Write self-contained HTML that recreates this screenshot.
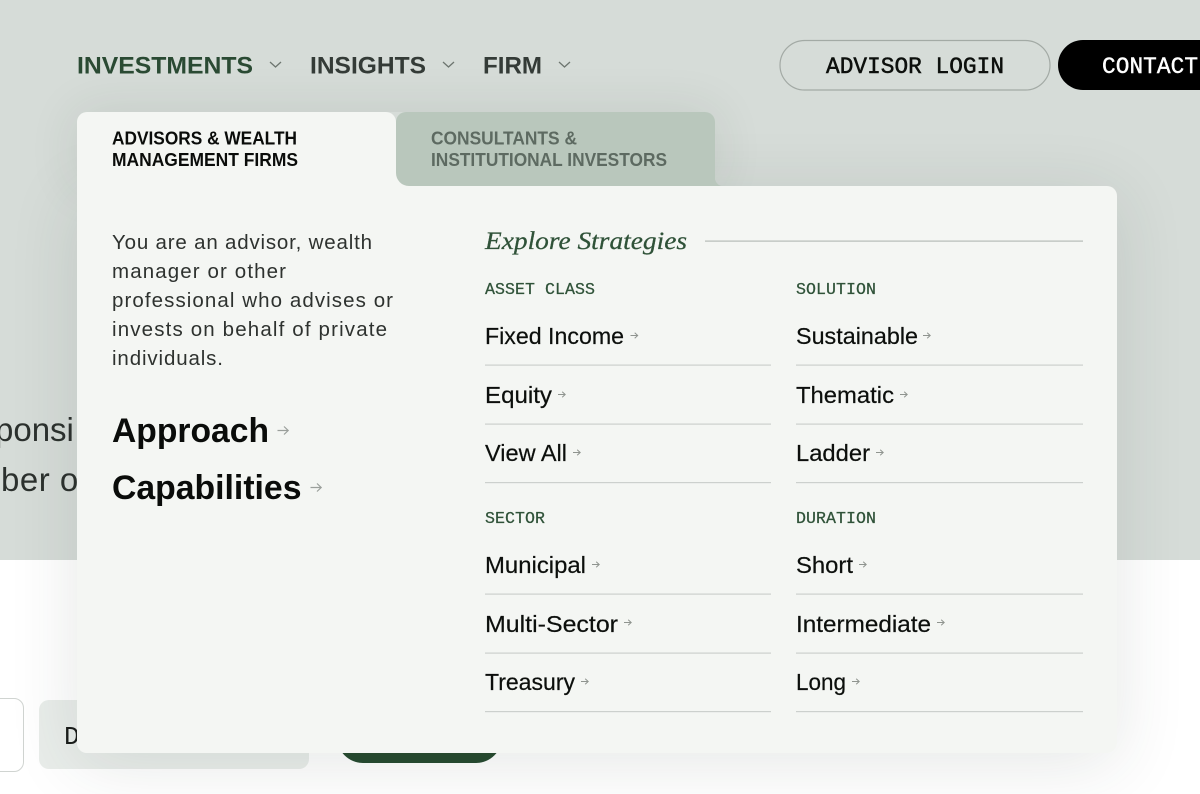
<!DOCTYPE html>
<html lang="en"><head><meta charset="utf-8"><title>Investments menu</title>
<style>
html,body{margin:0;padding:0;background:#fff;}
#p{position:relative;width:1200px;height:794px;overflow:hidden;background:#fff;}
#p>*{position:absolute;}
svg{left:0;top:0;}
svg text{font-family:"Liberation Sans",sans-serif;}
.m{font-family:"Liberation Mono",monospace!important;}
.s{font-family:"Liberation Serif",serif!important;}
.l{font-size:23px;fill:#0c0f0c;stroke:#0c0f0c;stroke-width:.2px;}
.h{font-size:16.6px;fill:#2f5238;stroke:#2f5238;stroke-width:.25px;}
.t{font-size:18px;font-weight:bold;}
.b{font-size:20.5px;fill:#2e322f;}
.n{font-size:24.5px;font-weight:bold;}
.a{font-size:34.5px;font-weight:bold;fill:#0a0c0a;}
</style></head><body>
<div id="p">
<div style="left:0;top:0;width:1200px;height:560px;background:#d6dcd8"></div>
<div style="left:-40px;top:698px;width:62px;height:72px;background:#fff;border:1.5px solid #d0d4d1;border-radius:10px"></div>
<div style="left:39px;top:700px;width:270px;height:69px;background:#e9edea;border-radius:10px"></div>
<div style="left:337px;top:700px;width:165px;height:63px;background:#264a2f;border-radius:26px"></div>
<svg width="1200" height="794" viewBox="0 0 1200 794">
<text x="-5" y="441" font-size="33" fill="#2c312e">ponsi</text>
<text x="1" y="491" font-size="33" fill="#2c312e" letter-spacing=".5">ber o</text>
<text class="m" x="64" y="744" font-size="26" fill="#1a1c1a">D</text>
</svg>
<div style="left:77px;top:186px;width:1040px;height:567px;border-radius:10px;box-shadow:0 10px 70px rgba(45,60,50,.12)"></div>
<div style="left:77px;top:112px;width:638px;height:74px;border-radius:10px 10px 0 0;box-shadow:0 0 50px rgba(45,60,50,.11)"></div>
<div style="left:77px;top:112px;width:319px;height:90px;background:#f4f6f3;border-radius:10px 10px 0 0"></div>
<div style="left:396px;top:170px;width:16px;height:16px;background:#f4f6f3"></div>
<div style="left:396px;top:112px;width:319px;height:74px;background:#b9c7bc;border-radius:10px 10px 0 13px"></div>
<div style="left:77px;top:186px;width:1040px;height:567px;background:#f4f6f3;border-radius:0 10px 10px 10px"></div>
<svg width="1200" height="794" viewBox="0 0 1200 794">
<defs>
<path id="ar" d="M0 0H7M4.200 -2.800L7.200 0L4.200 2.800" fill="none" stroke="#8f948f" stroke-width="1"/>
<path id="ab" d="M0 0H10.500M6.500 -4L10.700 0L6.500 4" fill="none" stroke="#9a9f9b" stroke-width="1.200"/>
<path id="ch" d="M0 0L5.500 5L11 0" fill="none" stroke="#6d756f" stroke-width="1.300"/>
</defs>
<path d="M714 174Q715 186 723 186L714 186Z" fill="#b9c7bc"/>
<text class="n" x="77" y="73.500" fill="#2a4a33" textLength="176" lengthAdjust="spacingAndGlyphs">INVESTMENTS</text>
<use href="#ch" x="270" y="62"/>
<text class="n" x="310" y="73.500" fill="#343b37" textLength="116" lengthAdjust="spacingAndGlyphs">INSIGHTS</text>
<use href="#ch" x="443" y="62"/>
<text class="n" x="483" y="73.500" fill="#343b37" textLength="59" lengthAdjust="spacingAndGlyphs">FIRM</text>
<use href="#ch" x="559" y="62"/>
<rect x="780" y="40.500" width="270" height="49.500" rx="24.700" fill="none" stroke="#a3aaa5" stroke-width="1.200"/>
<rect x="1058" y="40" width="190" height="50" rx="25" fill="#000"/>
<text class="m" x="826" y="73" font-size="22.800" fill="#0c0f0c" stroke="#0c0f0c" stroke-width=".5" textLength="178" lengthAdjust="spacing">ADVISOR LOGIN</text>
<text class="m" x="1102" y="73" font-size="22.800" fill="#fff" stroke="#fff" stroke-width=".4" textLength="96" lengthAdjust="spacing">CONTACT</text>

<text class="t" x="112" y="144.500" fill="#0a0c0a" textLength="185" lengthAdjust="spacingAndGlyphs">ADVISORS &amp; WEALTH</text>
<text class="t" x="112" y="166" fill="#0a0c0a" textLength="186" lengthAdjust="spacingAndGlyphs">MANAGEMENT FIRMS</text>
<text class="t" x="431" y="144.500" fill="#5d6a61" textLength="146" lengthAdjust="spacingAndGlyphs">CONSULTANTS &amp;</text>
<text class="t" x="431" y="166" fill="#5d6a61" textLength="236" lengthAdjust="spacingAndGlyphs">INSTITUTIONAL INVESTORS</text>

<text class="b" x="112" y="249" textLength="260" lengthAdjust="spacing">You are an advisor, wealth</text>
<text class="b" x="112" y="278" textLength="174" lengthAdjust="spacing">manager or other</text>
<text class="b" x="112" y="307" textLength="281" lengthAdjust="spacing">professional who advises or</text>
<text class="b" x="112" y="336" textLength="275" lengthAdjust="spacing">invests on behalf of private</text>
<text class="b" x="112" y="365" textLength="111" lengthAdjust="spacing">individuals.</text>

<text class="a" x="112" y="442" textLength="157" lengthAdjust="spacingAndGlyphs">Approach</text>
<use href="#ab" x="277.500" y="430.500"/>
<text class="a" x="112" y="499" textLength="189.500" lengthAdjust="spacingAndGlyphs">Capabilities</text>
<use href="#ab" x="310.500" y="487.500"/>

<text class="s" x="485" y="249" font-size="25" font-style="italic" fill="#2f5238" stroke="#2f5238" stroke-width=".25" textLength="202" lengthAdjust="spacingAndGlyphs">Explore Strategies</text>
<rect x="705" y="240.500" width="378" height="1.200" fill="#b6bcb7"/>

<text class="m h" x="485" y="294" textLength="110" lengthAdjust="spacing">ASSET CLASS</text>
<text class="m h" x="796" y="294" textLength="80" lengthAdjust="spacing">SOLUTION</text>
<text class="m h" x="485" y="523" textLength="60" lengthAdjust="spacing">SECTOR</text>
<text class="m h" x="796" y="523" textLength="80" lengthAdjust="spacing">DURATION</text>

<text class="l" x="485" y="344" textLength="139" lengthAdjust="spacingAndGlyphs">Fixed Income</text><use href="#ar" x="630.500" y="335.500"/>
<text class="l" x="485" y="403" textLength="67" lengthAdjust="spacingAndGlyphs">Equity</text><use href="#ar" x="558" y="394.500"/>
<text class="l" x="485" y="461" textLength="82" lengthAdjust="spacingAndGlyphs">View All</text><use href="#ar" x="573" y="452.500"/>
<text class="l" x="485" y="573" textLength="101" lengthAdjust="spacingAndGlyphs">Municipal</text><use href="#ar" x="592" y="564.500"/>
<text class="l" x="485" y="632" textLength="133" lengthAdjust="spacingAndGlyphs">Multi-Sector</text><use href="#ar" x="624" y="622.500"/>
<text class="l" x="485" y="690" textLength="90" lengthAdjust="spacingAndGlyphs">Treasury</text><use href="#ar" x="581" y="681.500"/>

<text class="l" x="796" y="344" textLength="122" lengthAdjust="spacingAndGlyphs">Sustainable</text><use href="#ar" x="923" y="335.500"/>
<text class="l" x="796" y="403" textLength="98" lengthAdjust="spacingAndGlyphs">Thematic</text><use href="#ar" x="900" y="394.500"/>
<text class="l" x="796" y="461" textLength="74" lengthAdjust="spacingAndGlyphs">Ladder</text><use href="#ar" x="876" y="452.500"/>
<text class="l" x="796" y="573" textLength="57" lengthAdjust="spacingAndGlyphs">Short</text><use href="#ar" x="859" y="564.500"/>
<text class="l" x="796" y="632" textLength="135" lengthAdjust="spacingAndGlyphs">Intermediate</text><use href="#ar" x="937" y="622.500"/>
<text class="l" x="796" y="690" textLength="50" lengthAdjust="spacingAndGlyphs">Long</text><use href="#ar" x="852" y="681.500"/>

<g fill="#ccd0cd">
<rect x="485" y="364.500" width="286" height="1.200"/><rect x="485" y="423.500" width="286" height="1.200"/><rect x="485" y="482" width="286" height="1.200"/>
<rect x="485" y="593.500" width="286" height="1.200"/><rect x="485" y="652.500" width="286" height="1.200"/><rect x="485" y="711" width="286" height="1.200"/>
<rect x="796" y="364.500" width="287" height="1.200"/><rect x="796" y="423.500" width="287" height="1.200"/><rect x="796" y="482" width="287" height="1.200"/>
<rect x="796" y="593.500" width="287" height="1.200"/><rect x="796" y="652.500" width="287" height="1.200"/><rect x="796" y="711" width="287" height="1.200"/>
</g>
</svg>
</div>
</body></html>
